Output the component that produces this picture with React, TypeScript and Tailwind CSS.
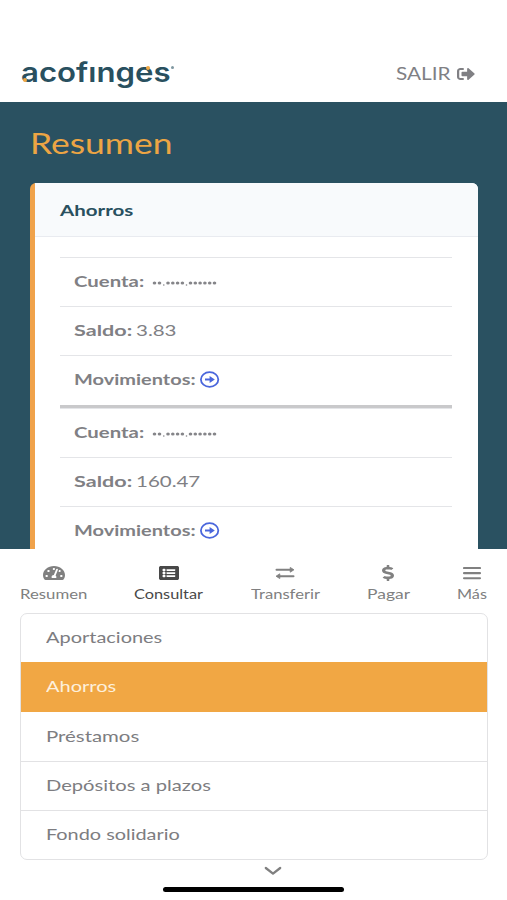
import { useLayoutEffect, useRef, useState } from "react";
import type { ReactNode } from "react";
import { FaDollarSign, FaListAlt, FaSignOutAlt, FaTachometerAlt } from "react-icons/fa";
import clsx from "clsx";

// Extended lettering: the text is widened to fill the width given by its class
function Wide({ className, children }: { className?: string; children: string }) {
  const box = useRef<HTMLSpanElement>(null);
  const text = useRef<HTMLSpanElement>(null);
  const [scale, setScale] = useState(1);

  useLayoutEffect(() => {
    if (box.current && text.current) {
      setScale(box.current.offsetWidth / text.current.offsetWidth);
    }
  }, [children]);

  return (
    <span ref={box} className={clsx("block shrink-0 whitespace-nowrap", className)}>
      <span ref={text} className="inline-block origin-left" style={{ transform: `scaleX(${scale})` }}>
        {children}
      </span>
    </span>
  );
}

function ArrowCircle() {
  return (
    <svg className="ml-[5px] h-[17px] w-5" viewBox="0 0 20 17" fill="none">
      <ellipse cx="9.6" cy="8.5" rx="8.7" ry="7.3" stroke="#4a66dc" strokeWidth="1.8" />
      <path d="M5 7.4h4.6V5l5.2 3.5-5.2 3.5V9.6H5z" fill="#4a66dc" />
    </svg>
  );
}

function Row({ children }: { children: ReactNode }) {
  return (
    <div className="flex h-[49.2px] items-center border-t border-[#e4e5e8] pb-[2px] pl-[14px] text-[16px] leading-[20px]">
      {children}
    </div>
  );
}

function Account({ balance, balanceWidth }: { balance: string; balanceWidth: string }) {
  return (
    <>
      <Row>
        <Wide className="w-[70px] font-bold">Cuenta:</Wide>
        <svg className="ml-[8px] mt-1 h-2 w-[65px]" viewBox="0 0 64 8" fill="#858589">
          {[2, 7, 15.5, 20.3, 25.1, 29.9, 38, 42.8, 47.6, 52.4, 57.2, 62].map((x) => (
            <ellipse key={x} cx={x} cy="4" rx="1.8" ry="1.6" />
          ))}
          <circle cx="11.3" cy="6" r="0.8" />
          <circle cx="34" cy="6" r="0.8" />
        </svg>
      </Row>
      <Row>
        <Wide className="w-[58px] font-bold">Saldo:</Wide>
        <Wide className={clsx("ml-[4px]", balanceWidth)}>{balance}</Wide>
      </Row>
      <Row>
        <Wide className="w-[121px] font-bold">Movimientos:</Wide>
        <ArrowCircle />
      </Row>
    </>
  );
}

const menu = [
  { label: "Aportaciones", width: "w-[116px]" },
  { label: "Ahorros", width: "w-[70px]", active: true },
  { label: "Préstamos", width: "w-[93px]" },
  { label: "Depósitos a plazos", width: "w-[165px]" },
  { label: "Fondo solidario", width: "w-[134px]" },
];

function Tab({ label, width, active, children }: { label: string; width: string; active?: boolean; children: ReactNode }) {
  return (
    <div className={clsx("flex flex-col items-center", active ? "text-[#484848]" : "text-[#808080]")}>
      <div className="flex h-[18px] items-center">{children}</div>
      <Wide className={clsx("mt-[4px] text-[13px] leading-[16px]", width)}>{label}</Wide>
    </div>
  );
}

export default function App() {
  return (
    <div className="flex h-[900px] w-[507px] flex-col overflow-hidden bg-white font-['Lato',sans-serif] text-[#808084]">
      <header className="flex h-[102px] shrink-0 items-end justify-between pb-[13px] pl-[21px] pr-[32px]">
        <div className="relative h-[32px]">
          <Wide className="w-[150px] font-['Inter',sans-serif] text-[27px] font-semibold leading-[32px] text-[#29505f]">acofınges</Wide>
          <span className="absolute left-[2px] top-[21px] h-1 w-1 rounded-full bg-[#f0a742]" />
          <span className="absolute left-[125px] top-[9px] h-1 w-1 rounded-full bg-[#f0a742]" />
          <span className="absolute left-[150px] top-[9px] h-[3px] w-[3px] rounded-full bg-[#7f97a0]" />
        </div>
        <div className="flex h-[30px] items-center">
          <Wide className="w-[55px] text-[17px] leading-[20px]">SALIR</Wide>
          <FaSignOutAlt preserveAspectRatio="none" className="ml-[6px] h-[16px] w-[18px]" />
        </div>
      </header>

      <main className="h-[447px] shrink-0 overflow-hidden bg-[#2a5161] pl-[30px] pr-[29px]">
        <h1 className="flex h-[81px] items-center text-[28px] leading-[34px] text-[#eca544]">
          <Wide className="w-[143px]">Resumen</Wide>
        </h1>
        <div className="h-[400px] rounded-[6px] border-l-[5px] border-[#f0a24a] bg-white">
          <div className="flex h-[54px] items-center rounded-tr-[6px] border-b border-[#e9ebf0] bg-[#f8fafc] pl-[25px] text-[16px] leading-[20px] text-[#29505f]">
            <Wide className="w-[73px] font-bold">Ahorros</Wide>
          </div>
          <div className="ml-[25px] mr-[26px] pt-5">
            <Account balance="3.83" balanceWidth="w-[41px]" />
            <div className="h-[3px] bg-[#c9c9cb]" />
            <Account balance="160.47" balanceWidth="w-[64px]" />
          </div>
        </div>
      </main>

      <nav className="flex h-[64px] shrink-0 justify-between pl-[20px] pr-[20px] pt-[15px]">
        <Tab label="Resumen" width="w-[67px]">
          <FaTachometerAlt preserveAspectRatio="none" className="h-4 w-[22px]" />
        </Tab>
        <Tab label="Consultar" width="w-[69px]" active>
          <FaListAlt preserveAspectRatio="none" className="h-4 w-5" />
        </Tab>
        <Tab label="Transferir" width="w-[69px]">
          <svg className="h-[14px] w-5" viewBox="0 0 20 14" fill="currentColor" stroke="currentColor" strokeLinejoin="round">
            <path d="M1.5 3.8H15M5 10.2h13.5" strokeWidth="2" strokeLinecap="round" />
            <path d="M15.2 1.4 19 3.8l-3.8 2.4zM4.8 7.8 1 10.2l3.8 2.4z" strokeWidth="0.8" />
          </svg>
        </Tab>
        <Tab label="Pagar" width="w-[43px]">
          <FaDollarSign preserveAspectRatio="none" className="h-4 w-3" />
        </Tab>
        <Tab label="Más" width="w-[30px]">
          <svg className="h-[14px] w-[18px]" viewBox="0 0 18 14" stroke="currentColor" strokeWidth="2.1" strokeLinecap="round">
            <path d="M1 2h16M1 7.1h16M1 12.2h16" />
          </svg>
        </Tab>
      </nav>

      <ul className="ml-5 mr-[19px] h-[247px] shrink-0 rounded-[7px] border border-[#e2e2e4]">
        {menu.map((item, i) => (
          <li
            key={item.label}
            className={clsx(
              "flex items-center pb-[2px] text-[16px] leading-[20px]",
              i === 0 && "h-[48px]",
              i > 1 && "h-[49px]",
              item.active ? "h-[50px] bg-[#f1a744] pl-[25px] text-[#fdf0dc]" : "pl-[25px] text-[#7d7d81]",
              i > 2 && "border-t border-[#e2e2e4]"
            )}
          >
            <Wide className={item.width}>{item.label}</Wide>
          </li>
        ))}
      </ul>

      <footer className="flex flex-col items-center">
        <svg className="ml-[38px] mt-[6px] h-[10px] w-[18px]" viewBox="0 0 18 10" fill="none" stroke="#808080" strokeWidth="2.3" strokeLinecap="round" strokeLinejoin="round">
          <path d="M1.8 2 9 7.6 16.2 2" />
        </svg>
        <div className="mt-[11px] h-[5px] w-[181px] rounded-full bg-black" />
      </footer>
    </div>
  );
}
